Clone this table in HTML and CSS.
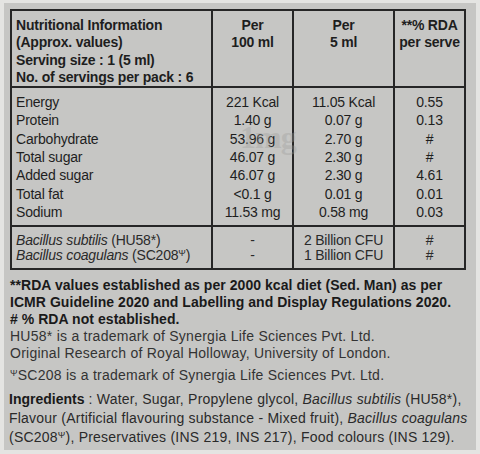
FILE: index.html
```html
<!DOCTYPE html>
<html lang="en">
<head>
    <meta charset="UTF-8">
    <meta name="viewport" content="width=device-width, initial-scale=1.0">
    <title>Nutritional Information</title>
    <link rel="stylesheet" href="styles.css">
</head>
<body>

    <!-- Label -->
    <div class="label">
        <span class="watermark">1mg</span>

        <table class="nutri-table">
            <thead>
                <tr>
                    <th class="name-col">Nutritional Information<br>(Approx. values)<br>Serving size : 1 (5 ml)<br>No. of servings per pack : 6</th>
                    <th class="c2">Per<br>100 ml</th>
                    <th class="c3">Per<br>5 ml</th>
                    <th class="c4">**% RDA<br>per serve</th>
                </tr>
            </thead>
            <tbody class="nutrients">
                <tr class="first"><td>Energy</td><td>221 Kcal</td><td>11.05 Kcal</td><td>0.55</td></tr>
                <tr><td>Protein</td><td>1.40 g</td><td>0.07 g</td><td>0.13</td></tr>
                <tr><td>Carbohydrate</td><td>53.96 g</td><td>2.70 g</td><td>#</td></tr>
                <tr><td>Total sugar</td><td>46.07 g</td><td>2.30 g</td><td>#</td></tr>
                <tr><td>Added sugar</td><td>46.07 g</td><td>2.30 g</td><td>4.61</td></tr>
                <tr><td>Total fat</td><td>&lt;0.1 g</td><td>0.01 g</td><td>0.01</td></tr>
                <tr class="last"><td>Sodium</td><td>11.53 mg</td><td>0.58 mg</td><td>0.03</td></tr>
            </tbody>
            <tbody class="cultures">
                <tr class="first"><td><i>Bacillus subtilis</i> (HU58*)</td><td>-</td><td>2 Billion CFU</td><td>#</td></tr>
                <tr class="last"><td><i>Bacillus coagulans</i> (SC208<sup>Ψ</sup>)</td><td>-</td><td>1 Billion CFU</td><td>#</td></tr>
            </tbody>
        </table>

        <!-- Notes -->
        <div class="notes">
            <p class="bold">**RDA values established as per 2000 kcal diet (Sed. Man) as per ICMR Guideline 2020 and Labelling and Display Regulations 2020.<br># % RDA not established.</p>
            <p>HU58* is a trademark of Synergia Life Sciences Pvt. Ltd.<br>Original Research of Royal Holloway, University of London.</p>
            <p class="tm"><sup>Ψ</sup>SC208 is a trademark of Synergia Life Sciences Pvt. Ltd.</p>
            <p class="ingredients"><b>Ingredients</b> : Water, Sugar, Propylene glycol, <i>Bacillus subtilis</i> (HU58*),<br>Flavour (Artificial flavouring substance - Mixed fruit), <i>Bacillus coagulans</i><br>(SC208<sup>Ψ</sup>), Preservatives (INS 219, INS 217), Food colours (INS 129).</p>
        </div>
    </div>

</body>
</html>
```

FILE: styles.css
```css
/* General Styling */
body {
    margin: 0;
    background-color: #e4e4e2;
    font-family: "Liberation Sans", Arial, sans-serif;
    color: #1e1e1e;
}

.label {
    position: relative;
    margin: 3px 4px 0 4px;
    height: 447px;
    padding: 6px 6px 0 6px;
    box-sizing: border-box;
    background-color: #c6c6c4;
}

.watermark {
    position: absolute;
    left: 236px;
    top: 116px;
    font-family: "Liberation Serif", serif;
    font-weight: bold;
    font-size: 32px;
    letter-spacing: -1px;
    color: #9e9e9c;
    opacity: 0.35;
}

/* Table Styling */
.nutri-table {
    width: 456px;
    border-collapse: collapse;
    table-layout: fixed;
    border: 2px solid #262626;
    font-size: 14px;
    letter-spacing: -0.2px;
}

.nutri-table th {
    font-weight: bold;
    font-size: 14px;
    line-height: 17.3px;
    vertical-align: top;
    text-align: center;
    padding: 6px 2px 0 2px;
    border-right: 2px solid #262626;
    border-bottom: 2px solid #262626;
}

.nutri-table th.name-col {
    text-align: left;
    padding-left: 4px;
    width: 193px;
}

.nutri-table th.c2 { width: 75px; }
.nutri-table th.c3 { width: 95px; }
.nutri-table th.c4 { border-right: none; }

.nutri-table td {
    text-align: center;
    padding: 0 2px;
    line-height: 18.3px;
    border-right: 2px solid #262626;
    white-space: nowrap;
}

.nutri-table td:first-child {
    text-align: left;
    padding-left: 4px;
}

.nutri-table td:last-child {
    border-right: none;
}

.nutrients .first td { padding-top: 5px; }
.nutrients .last td { padding-bottom: 4px; border-bottom: 2px solid #262626; }

.cultures td {
    line-height: 14.5px;
    color: #2a2a2a;
}

.cultures .first td { padding-top: 6px; }
.cultures .last td { padding-bottom: 6px; }

sup {
    font-size: 9px;
    line-height: 0;
    vertical-align: 4px;
}

/* Notes Styling */
.notes {
    margin-top: 7px;
    font-size: 14px;
    line-height: 17px;
    color: #333;
    letter-spacing: 0.25px;
}

.notes p {
    margin: 0;
}

.notes .bold {
    font-weight: bold;
    color: #1a1a1a;
    letter-spacing: 0.05px;
}

.notes .tm {
    margin-top: 5px;
}

.notes .ingredients {
    margin-top: 6px;
    margin-left: -1px;
    line-height: 19px;
    color: #2a2a2a;
    letter-spacing: 0.22px;
    white-space: nowrap;
}

.notes .ingredients b {
    color: #1a1a1a;
    letter-spacing: 0;
}
```
